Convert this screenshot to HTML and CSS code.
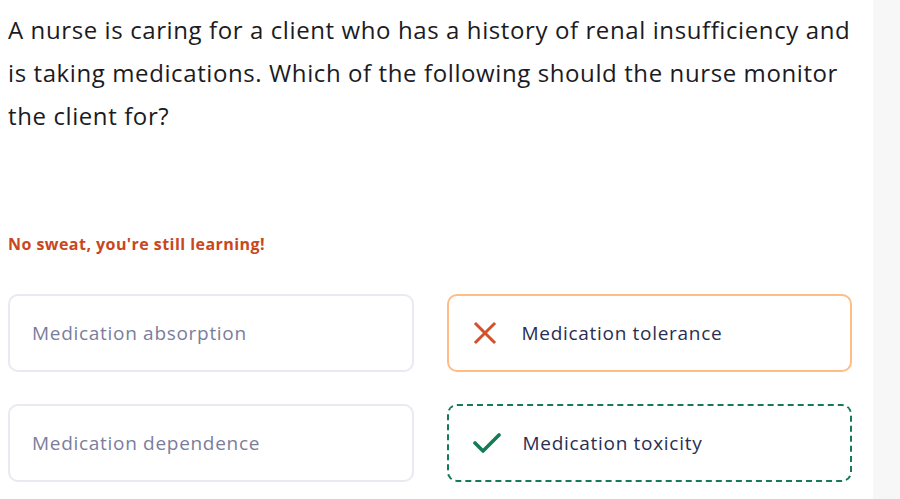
FILE: index.html
```html
<!DOCTYPE html>
<html lang="en">

<head>
    <meta charset="UTF-8">
    <meta name="viewport" content="width=device-width, initial-scale=1.0">
    <title>Question</title>
    <link rel="stylesheet" href="styles.css">
</head>

<body>
    <div class="Page">
        <main class="Quiz">
            <h1 class="Quiz-question">A nurse is caring for a client who has a history of renal insufficiency and is taking medications. Which of the following should the nurse monitor the client for?</h1>

            <p class="Quiz-feedback">No sweat, you're still learning!</p>

            <div class="Quiz-options">
                <div class="Option">
                    <span class="Option-text">Medication absorption</span>
                </div>
                <div class="Option is-wrong">
                    <svg class="Option-icon" viewBox="0 0 24 24" width="24" height="24">
                        <path d="M3 3 L21 21 M21 3 L3 21" stroke="#d2502a" stroke-width="3" fill="none" stroke-linecap="square"/>
                    </svg>
                    <span class="Option-text">Medication tolerance</span>
                </div>
                <div class="Option">
                    <span class="Option-text">Medication dependence</span>
                </div>
                <div class="Option is-correct">
                    <svg class="Option-icon" viewBox="0 0 28 24" width="28" height="24">
                        <path d="M2 12 L10 20 L26 4" stroke="#167a55" stroke-width="3.6" fill="none" stroke-linecap="round" stroke-linejoin="round"/>
                    </svg>
                    <span class="Option-text">Medication toxicity</span>
                </div>
            </div>
        </main>
        <aside class="Sidebar"></aside>
    </div>
</body>

</html>
```

FILE: styles.css
```css
/* VARIABLES */
:root {
    --color-text: #1b1b24;
    --color-muted: #7a7d9b;
    --color-dark: #2a2e52;
    --color-feedback: #c9471c;
    --color-border: #e8e9f1;
    --color-wrong: #fdbd85;
    --color-correct: #167a55;
}

/* RESET */
* {
    margin: 0;
    padding: 0;
    box-sizing: border-box;
}

body {
    font-family: "Open Sans", Arial, sans-serif;
    background: #fff;
    color: var(--color-text);
    height: 100vh;
    overflow: hidden;
}

.Page {
    display: flex;
    height: 100%;
}

/* QUIZ */
.Quiz {
    flex: 1;
    padding: 8px 21px 0 8px;
}

.Quiz-question {
    font-size: 24px;
    font-weight: 400;
    line-height: 43px;
    letter-spacing: 0.6px;
}

.Quiz-feedback {
    margin-top: 93px;
    font-size: 16px;
    font-weight: 700;
    color: var(--color-feedback);
    line-height: 28px;
    letter-spacing: 0.45px;
}

.Quiz-options {
    margin-top: 36px;
    display: grid;
    grid-template-columns: 1fr 1fr;
    column-gap: 33px;
    row-gap: 32px;
}

.Option {
    height: 78px;
    border: 2px solid var(--color-border);
    border-radius: 10px;
    display: flex;
    align-items: center;
    gap: 22px;
    padding-left: 22px;
}

.Option-text {
    font-size: 19px;
    letter-spacing: 0.7px;
    color: var(--color-muted);
}

.Option.is-wrong {
    border-color: var(--color-wrong);
}

.Option.is-correct {
    border: 2px dashed var(--color-correct);
}

.Option.is-wrong .Option-text,
.Option.is-correct .Option-text {
    color: var(--color-dark);
}

.Option-icon {
    margin-left: 2px;
}

.Option.is-wrong .Option-icon {
    margin-right: 3px;
}

/* SIDEBAR */
.Sidebar {
    width: 27px;
    background: #f8f7f8;
}
```
